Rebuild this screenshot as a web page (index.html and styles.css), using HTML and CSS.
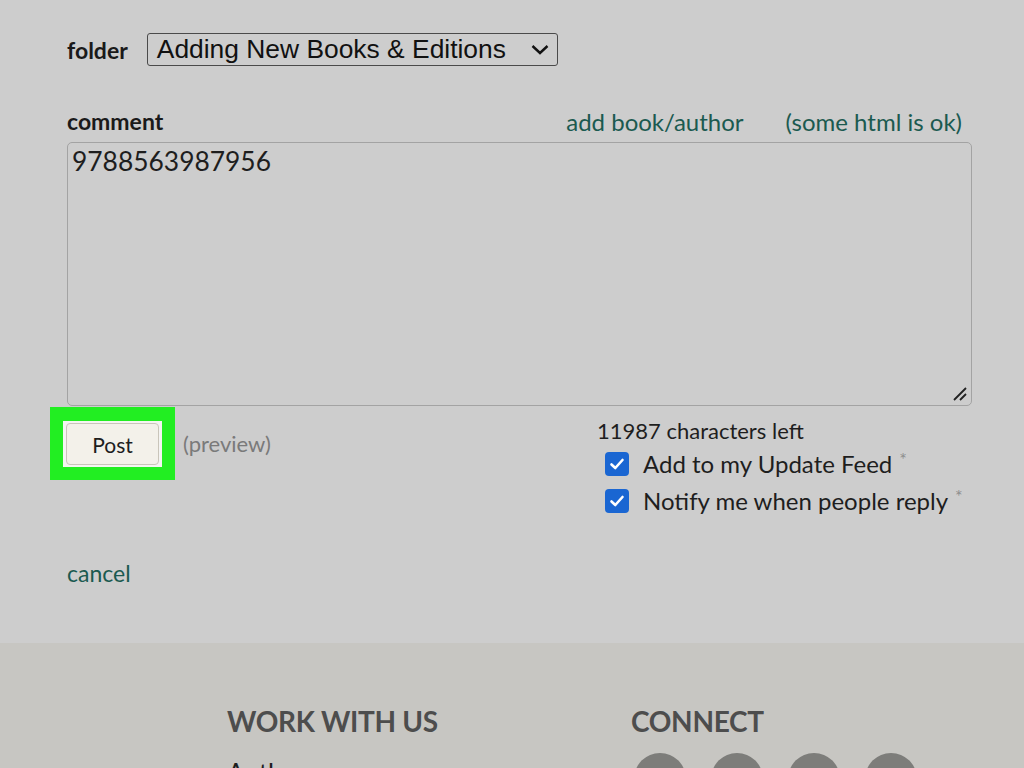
FILE: index.html
```html
<!DOCTYPE html>
<html lang="en">
<head>
<meta charset="utf-8">
<title>Post a topic</title>
<link rel="stylesheet" href="styles.css">
</head>
<body>
<main class="main">
  <div class="folder-row">
    <span class="label">folder</span>
    <div class="select">
      <span class="select-text">Adding New Books &amp; Editions</span>
      <svg class="chevron" width="20" height="13" viewBox="0 0 20 13"><path d="M2.5 3 L10 10 L17.5 3" fill="none" stroke="#111" stroke-width="2.4"/></svg>
    </div>
  </div>

  <div class="comment-head">
    <span class="label">comment</span>
    <div class="head-links">
      <a class="link" href="#">add book/author</a>
      <span class="link">(some html is ok)</span>
    </div>
  </div>
  <div class="textarea">
    <span class="ta-text">9788563987956</span>
    <svg class="grip" width="16" height="16" viewBox="0 0 16 16"><path d="M2 14 L14 2 M8 14 L14 8" stroke="#222" stroke-width="1.8" fill="none"/></svg>
  </div>

  <div class="actions">
    <div class="left-actions">
      <div class="highlight"><button class="post">Post</button></div>
      <span class="preview">(preview)</span>
    </div>
    <div class="right-actions">
      <div class="chars">11987 characters left</div>
      <label class="check-row"><span class="checkbox"><svg width="16" height="14" viewBox="0 0 16 14"><path d="M2.5 7.5 L6.3 11 L13.5 3" fill="none" stroke="#fff" stroke-width="2.6" stroke-linecap="round" stroke-linejoin="round"/></svg></span><span>Add to my Update Feed</span><span class="ast">*</span></label>
      <label class="check-row"><span class="checkbox"><svg width="16" height="14" viewBox="0 0 16 14"><path d="M2.5 7.5 L6.3 11 L13.5 3" fill="none" stroke="#fff" stroke-width="2.6" stroke-linecap="round" stroke-linejoin="round"/></svg></span><span>Notify me when people reply</span><span class="ast">*</span></label>
    </div>
  </div>

  <a class="link cancel" href="#">cancel</a>
</main>

<footer class="footer">
  <div class="fcol">
    <h3 class="fhead">WORK WITH US</h3>
    <div class="fitem">Authors</div>
  </div>
  <div class="fcol">
    <h3 class="fhead">CONNECT</h3>
    <div class="circles">
      <span class="circle"></span><span class="circle"></span><span class="circle"></span><span class="circle"></span>
    </div>
  </div>
</footer>
</body>
</html>
```

FILE: styles.css
```css
html, body {
  margin: 0;
  padding: 0;
}
body {
  background: #cdcdcd;
  font-family: Lato, "Open Sans", sans-serif;
  color: #1e1e1e;
  height: 768px;
  overflow: hidden;
}
.main {
  padding: 33px 52px 0 67px;
  height: 643px;
  box-sizing: border-box;
}
.label {
  font-weight: 700;
  font-size: 23px;
  color: #1a1a1a;
}
.folder-row {
  display: flex;
  align-items: center;
  gap: 19px;
}
.select {
  width: 411px;
  height: 33px;
  box-sizing: border-box;
  border: 1px solid #4a4a4a;
  border-radius: 3px;
  display: flex;
  align-items: center;
  justify-content: space-between;
  padding: 0 7px 0 9px;
  font-family: "Liberation Sans", Arial, sans-serif;
  font-size: 26.4px;
  color: #111;
}
.chevron { display: block; }
.comment-head {
  margin-top: 42px;
  display: flex;
  justify-content: space-between;
  align-items: center;
  padding-right: 10px;
  height: 26px;
}
.head-links {
  display: flex;
  gap: 42px;
}
.link {
  color: #1b5a50;
  font-size: 24px;
  text-decoration: none;
}
.textarea {
  margin-top: 8px;
  height: 264px;
  box-sizing: border-box;
  border: 1px solid #a3a3a3;
  border-radius: 5px;
  padding: 2px 4px;
  position: relative;
  font-size: 26.4px;
  color: #1e1e1e;
}
.grip {
  position: absolute;
  right: 3px;
  bottom: 3px;
}
.actions {
  display: flex;
  justify-content: space-between;
  align-items: flex-start;
}
.left-actions {
  display: flex;
  align-items: center;
  gap: 8px;
  margin-left: -17px;
  margin-top: 1px;
}
.highlight {
  border: 13px solid #22ee22;
  border-top-width: 14px;
  background: #f4f4f2;
  padding: 2px 3px;
  display: flex;
}
.post {
  width: 93px;
  height: 42px;
  box-sizing: border-box;
  background: #f3f1ea;
  border: 1px solid #c9c5ba;
  border-radius: 4px;
  font-family: Lato, sans-serif;
  font-size: 21px;
  color: #1e1e1e;
  padding: 0;
}
.preview {
  font-size: 22px;
  color: #7a7a7a;
}
.right-actions {
  width: 375px;
  padding-top: 13px;
}
.chars {
  font-size: 22px;
  line-height: 24px;
  color: #1e1e1e;
}
.check-row {
  display: flex;
  align-items: center;
  height: 37px;
  padding-left: 8px;
  font-size: 24px;
  color: #1e1e1e;
}
.check-row:first-of-type { margin-top: 2px; }
.checkbox {
  width: 24px;
  height: 24px;
  border-radius: 4px;
  background: #1a66d2;
  display: flex;
  align-items: center;
  justify-content: center;
  margin-right: 14px;
}
.ast {
  color: #8e8e8e;
  font-size: 18px;
  align-self: flex-start;
  margin-top: 3px;
  margin-left: 7px;
}
.cancel {
  display: inline-block;
  margin-top: 40px;
  font-size: 23px;
}
.footer {
  background: #c7c6c2;
  height: 125px;
  display: grid;
  grid-template-columns: 404px 1fr;
  padding-left: 227px;
  overflow: hidden;
}
.fhead {
  margin: 62px 0 0 0;
  font-size: 28px;
  font-weight: 700;
  color: #4d4d4d;
  line-height: 32px;
  letter-spacing: -0.3px;
}
.fitem {
  margin-top: 20px;
  font-size: 26px;
  line-height: 32px;
  color: #1e1e1e;
}
.circles {
  display: flex;
  gap: 25px;
  margin-top: 16px;
  padding-left: 3px;
}
.circle {
  width: 52px;
  height: 52px;
  border-radius: 50%;
  background: #7d7d7a;
}
```
